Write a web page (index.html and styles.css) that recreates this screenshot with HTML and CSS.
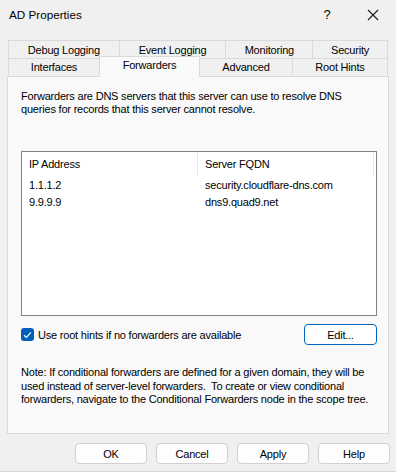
FILE: index.html
```html
<!DOCTYPE html>
<html lang="en">

<head>
    <meta charset="UTF-8">
    <meta name="viewport" content="width=device-width, initial-scale=1.0">
    <title>AD Properties</title>
    <link rel="stylesheet" href="styles.css">
</head>

<body>

    <div class="window">
        <!-- Title bar -->
        <div class="titlebar">
            <div class="title">AD Properties</div>
            <div class="title-help">?</div>
            <div class="title-close">
                <svg width="12" height="12" viewBox="0 0 12 12">
                    <path d="M1 1 L11 11 M11 1 L1 11" stroke="#1a1a1a" stroke-width="1.1" fill="none" />
                </svg>
            </div>
        </div>

        <!-- Tabs, two rows -->
        <div class="tabs">
            <div class="tab-row">
                <div class="tab w111">Debug Logging</div>
                <div class="tab w107">Event Logging</div>
                <div class="tab w87">Monitoring</div>
                <div class="tab w75">Security</div>
            </div>
            <div class="tab-row">
                <div class="tab w92">Interfaces</div>
                <div class="tab w100 active">Forwarders</div>
                <div class="tab w93">Advanced</div>
                <div class="tab w95">Root Hints</div>
            </div>
        </div>

        <div class="panel">
            <p class="intro">Forwarders are DNS servers that this server can use to resolve DNS queries for records that this server cannot resolve.</p>

            <div class="list">
                <div class="list-head">
                    <div class="col">IP Address</div>
                    <div class="col">Server FQDN</div>
                </div>
                <div class="list-row">
                    <div class="col">1.1.1.2</div>
                    <div class="col">security.cloudflare-dns.com</div>
                </div>
                <div class="list-row">
                    <div class="col">9.9.9.9</div>
                    <div class="col">dns9.quad9.net</div>
                </div>
            </div>

            <div class="options">
                <label class="check">
                    <span class="box">
                        <svg width="9" height="8" viewBox="0 0 9 8">
                            <path d="M1 4.2 L3.4 6.4 L8 1.4" stroke="#fff" stroke-width="1.2" fill="none" />
                        </svg>
                    </span>
                    Use root hints if no forwarders are available
                </label>
                <button class="btn btn-default">Edit...</button>
            </div>

            <p class="note">Note: If conditional forwarders are defined for a given domain, they will be used instead of server-level forwarders.&nbsp; To create or view conditional forwarders, navigate to the Conditional Forwarders node in the scope tree.</p>
        </div>

        <!-- Dialog buttons -->
        <div class="actions">
            <button class="btn">OK</button>
            <button class="btn">Cancel</button>
            <button class="btn">Apply</button>
            <button class="btn">Help</button>
        </div>
    </div>

</body>

</html>
```

FILE: styles.css
```css
body {
    font-family: 'Liberation Sans', Arial, sans-serif;
    font-size: 11px;
    letter-spacing: -0.2px;
    background-color: #ffffff;
    color: #000;
    margin: 0;
    padding: 0;
}

.window {
    width: 396px;
    height: 471px;
    background-color: #f0f0f0;
    border-bottom: 1px solid #d6d6d6;
    display: flex;
    flex-direction: column;
}

/* Title bar */
.titlebar {
    height: 29px;
    display: flex;
    align-items: center;
    padding-left: 9px;
}

.title {
    flex: 1;
    font-size: 11.7px;
    letter-spacing: 0;
}

.title-help {
    width: 46px;
    text-align: center;
    font-size: 13px;
}

.title-close {
    width: 46px;
    display: flex;
    justify-content: center;
    align-items: center;
}

/* Tabs */
.tabs {
    margin-top: 11px;
    padding: 0 8px;
}

.tab-row {
    display: flex;
}

.tab {
    height: 17px;
    line-height: 17px;
    text-align: center;
    border: 1px solid #dadada;
    border-bottom: none;
    margin-left: -1px;
    box-sizing: border-box;
    background-color: #f0f0f0;
}

.tab-row:first-child .tab {
    height: 18px;
    line-height: 18px;
}

.tab:first-child {
    margin-left: 0;
}

.tab.active {
    height: 21px;
    line-height: 17px;
    margin-top: -2px;
    margin-bottom: -1px;
    background-color: #f9f9f9;
    position: relative;
    z-index: 1;
}

.w111 { width: 112px; }
.w107 { width: 108px; }
.w87 { width: 88px; }
.w75 { width: 76px; }
.w92 { width: 92px; }
.w100 { width: 101px; }
.w93 { width: 94px; }
.w95 { width: 96px; }

/* Panel */
.panel {
    margin: 0 7px;
    height: 358px;
    box-sizing: border-box;
    border: 1px solid #dadada;
    background-color: #f9f9f9;
    padding: 13px 12px 0 13px;
}

.intro {
    margin: 0;
    line-height: 13px;
    width: 340px;
}

.list {
    margin-top: 35px;
    width: 356px;
    height: 165px;
    box-sizing: border-box;
    border: 1px solid #828282;
    background-color: #fff;
}

.list-head,
.list-row {
    display: flex;
}

.list-head {
    height: 25px;
    align-items: center;
}

.list-head .col {
    border-right: 1px solid #e5e5e5;
    height: 23px;
    line-height: 23px;
}

.list-row {
    height: 17px;
    line-height: 17px;
}

.col {
    width: 176px;
    box-sizing: border-box;
    padding-left: 7px;
}

.options {
    margin-top: 8px;
    display: flex;
    align-items: center;
    justify-content: space-between;
    width: 356px;
}

.check {
    display: flex;
    align-items: center;
    gap: 4px;
}

.box {
    width: 13px;
    height: 13px;
    border-radius: 3px;
    background-color: #005fb8;
    display: flex;
    align-items: center;
    justify-content: center;
}

.btn {
    font-family: 'Liberation Sans', Arial, sans-serif;
    font-size: 11px;
    letter-spacing: -0.2px;
    color: #000;
    width: 72px;
    height: 21px;
    padding: 0;
    background-color: #fdfdfd;
    border: 1px solid #d0d0d0;
    border-radius: 4px;
}

.btn-default {
    width: 73px;
    border-color: #0067c0;
    background-color: #fff;
}

.note {
    margin: 21px 0 0 0;
    line-height: 13.5px;
    width: 362px;
}

/* Dialog buttons */
.actions {
    display: flex;
    justify-content: flex-end;
    gap: 9px;
    padding: 9px 6px 0 0;
}
```
